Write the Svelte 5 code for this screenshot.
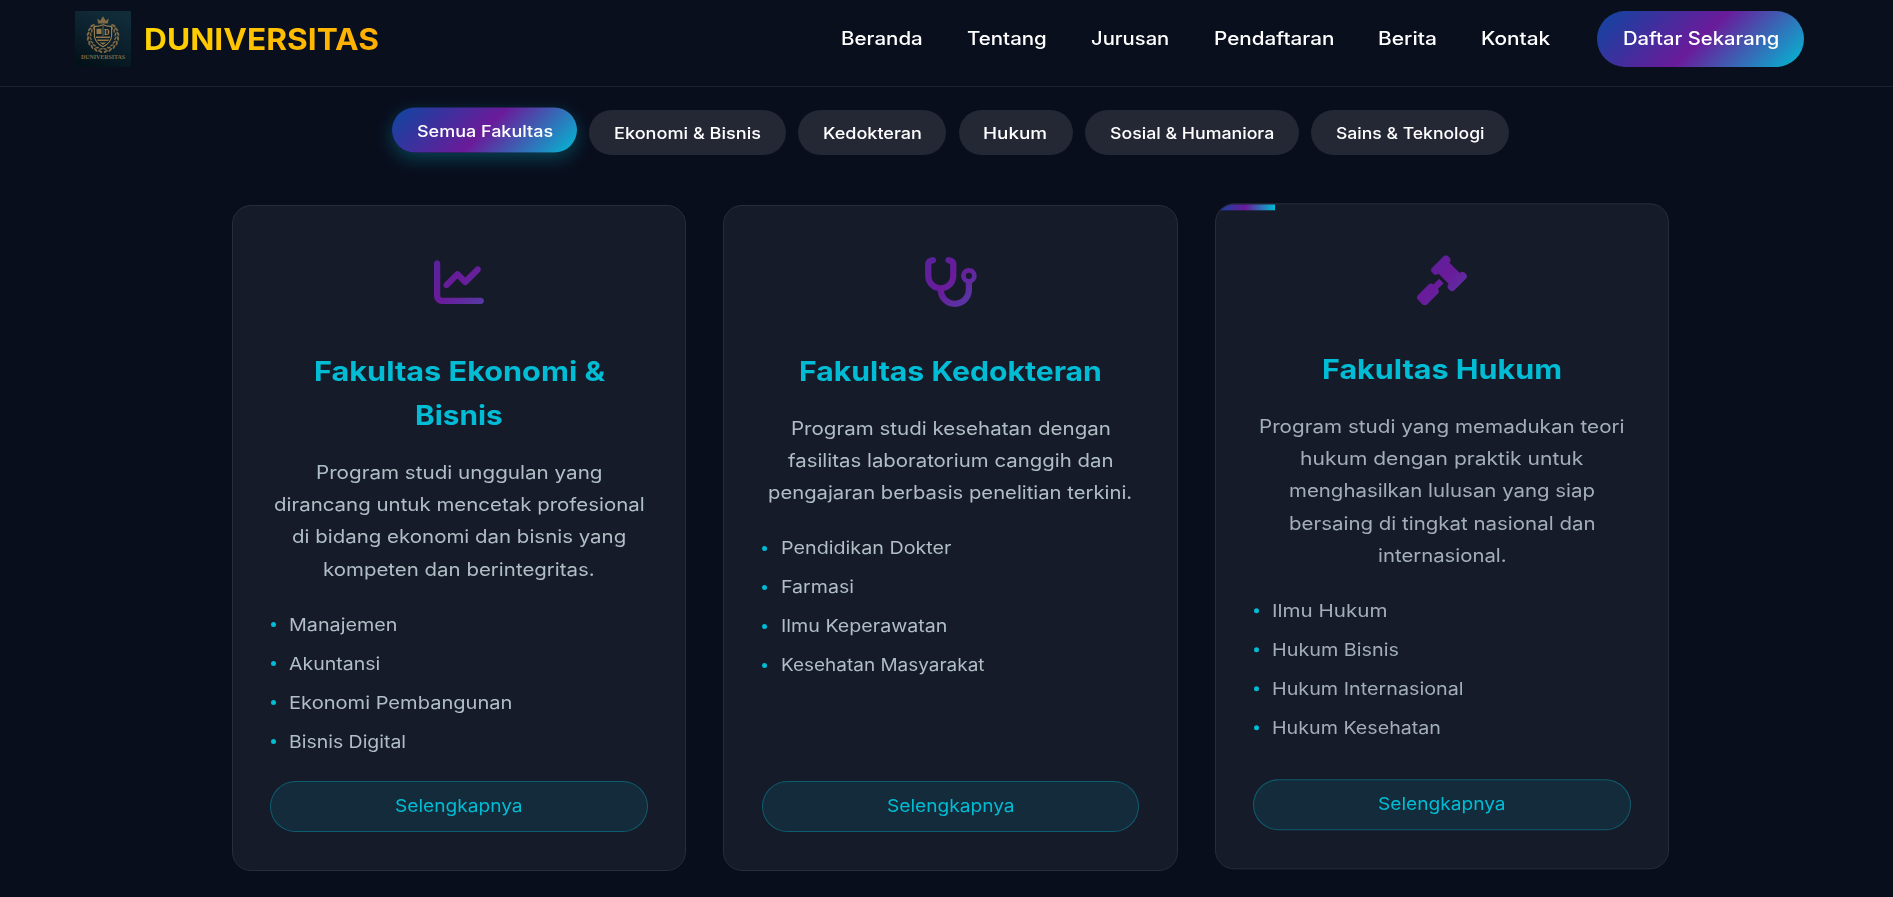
<script>
  const nav = [
    ['Beranda', 82], ['Tentang', 79.5], ['Jurusan', 78.5],
    ['Pendaftaran', 120], ['Berita', 58.5], ['Kontak', 69.5]
  ];

  const filters = [
    ['Semua Fakultas', 136, 185], ['Ekonomi & Bisnis', 147, 197], ['Kedokteran', 99, 148],
    ['Hukum', 64.5, 114], ['Sosial & Humaniora', 164.5, 214], ['Sains & Teknologi', 148, 198]
  ];

  const faculties = [
    {
      icon: 'chart',
      title: [['Fakultas Ekonomi &', 291], ['Bisnis', 88]],
      text: [
        ['Program studi unggulan yang', 287], ['dirancang untuk mencetak profesional', 371],
        ['di bidang ekonomi dan bisnis yang', 334], ['kompeten dan berintegritas.', 272]
      ],
      programs: [['Manajemen', 108.5], ['Akuntansi', 91.5], ['Ekonomi Pembangunan', 223], ['Bisnis Digital', 117]]
    },
    {
      icon: 'stethoscope',
      title: [['Fakultas Kedokteran', 303]],
      text: [
        ['Program studi kesehatan dengan', 319.5], ['fasilitas laboratorium canggih dan', 325],
        ['pengajaran berbasis penelitian terkini.', 364]
      ],
      programs: [['Pendidikan Dokter', 170], ['Farmasi', 72.5], ['Ilmu Keperawatan', 166], ['Kesehatan Masyarakat', 203]]
    },
    {
      icon: 'gavel',
      hovered: true,
      title: [['Fakultas Hukum', 240.5]],
      text: [
        ['Program studi yang memadukan teori', 365.5], ['hukum dengan praktik untuk', 283.5],
        ['menghasilkan lulusan yang siap', 306.5], ['bersaing di tingkat nasional dan', 306],
        ['internasional.', 128.5]
      ],
      programs: [['Ilmu Hukum', 115.5], ['Hukum Bisnis', 127], ['Hukum Internasional', 192], ['Hukum Kesehatan', 169.5]]
    }
  ];

  const icons = {
    chart: {
      w: 512,
      d: 'M64 64c0-17.7-14.3-32-32-32S0 46.3 0 64V400c0 44.2 35.8 80 80 80H480c17.7 0 32-14.3 32-32s-14.3-32-32-32H80c-8.8 0-16-7.2-16-16V64zm406.6 86.6c12.5-12.5 12.5-32.8 0-45.3s-32.8-12.5-45.3 0L320 210.7l-57.4-57.4c-12.5-12.5-32.8-12.5-45.3 0l-112 112c-12.5 12.5-12.5 32.8 0 45.3s32.8 12.5 45.3 0L240 221.3l57.4 57.4c12.5 12.5 32.8 12.5 45.3 0l128-128z'
    },
    stethoscope: {
      w: 576,
      d: 'M142.4 21.9c5.6 16.8-3.5 34.9-20.2 40.5L96 71.1V192c0 53 43 96 96 96s96-43 96-96V71.1l-26.1-8.7c-16.8-5.6-25.8-23.7-20.2-40.5s23.7-25.8 40.5-20.2l26.1 8.7C334.4 19.1 352 43.5 352 71.1V192c0 77.2-54.6 141.6-127.3 156.7C231 404.6 278.4 448 336 448c61.9 0 112-50.1 112-112V265.3c-28.3-12.3-48-40.5-48-73.3c0-44.2 35.8-80 80-80s80 35.8 80 80c0 32.8-19.7 61-48 73.3V336c0 97.2-78.8 176-176 176c-92.9 0-168.9-71.9-175.5-163.1C87.2 334.2 32 269.6 32 192V71.1c0-27.5 17.6-52 43.8-60.7l26.1-8.7c16.8-5.6 34.9 3.5 40.5 20.2zM480 224a32 32 0 1 0 0-64 32 32 0 1 0 0 64z'
    },
    gavel: {
      w: 512,
      d: 'M318.6 9.4c-12.5-12.5-32.8-12.5-45.3 0l-120 120c-12.5 12.5-12.5 32.8 0 45.3l16 16c12.5 12.5 32.8 12.5 45.3 0l4-4L325.4 293.4l-4 4c-12.5 12.5-12.5 32.8 0 45.3l16 16c12.5 12.5 32.8 12.5 45.3 0l120-120c12.5-12.5 12.5-32.8 0-45.3l-16-16c-12.5-12.5-32.8-12.5-45.3 0l-4 4L330.6 74.6l4-4c12.5-12.5 12.5-32.8 0-45.3l-16-16zm-152 288c-12.5-12.5-32.8-12.5-45.3 0l-112 112c-12.5 12.5-12.5 32.8 0 45.3l48 48c12.5 12.5 32.8 12.5 45.3 0l112-112c12.5-12.5 12.5-32.8 0-45.3l-1.4-1.4L272 285.3 226.7 240 168 298.7l-1.4-1.4z'
    }
  };

  // Leaves of the left half of the laurel wreath, as angles round the shield.
  const leaves = [100, 118, 136, 154, 172, 190, 208, 226];

  // Widens the letterforms so that a line takes exactly the given width.
  function stretch(node, width) {
    node.style.transform = `scaleX(${width / node.offsetWidth})`;
  }
</script>

{#snippet line(text, width)}
  <span class="line" style="width: {width}px"><span class="glyphs" use:stretch={width}>{text}</span></span>
{/snippet}

<header>
  <div class="brand">
    <svg class="crest" viewBox="0 0 56 56" aria-hidden="true">
      <defs>
        <linearGradient id="crest-bg" x1="0.7" y1="0" x2="0.3" y2="1">
          <stop offset="0" stop-color="#122d3a" />
          <stop offset="0.55" stop-color="#0a1f2b" />
          <stop offset="1" stop-color="#031219" />
        </linearGradient>
      </defs>
      <rect width="56" height="56" fill="url(#crest-bg)" />
      <g fill="#806a45">
        <path d="M23.2 12.6 22.2 7.6l3 2.2L28 5.2l2.8 4.6 3-2.2-1 5z" />
        {#each leaves as a}
          <ellipse cx="15.2" cy="0" rx="1" ry="2.4" transform="translate(28 25.5) rotate({a}) rotate(18 14.7 0)" />
          <ellipse cx="12.6" cy="0" rx="0.8" ry="2" transform="translate(28 25.5) rotate({a}) rotate(-24 12.2 0)" />
          <ellipse cx="15.2" cy="0" rx="1" ry="2.4" transform="translate(28 25.5) scale(-1 1) rotate({a}) rotate(18 14.7 0)" />
          <ellipse cx="12.6" cy="0" rx="0.8" ry="2" transform="translate(28 25.5) scale(-1 1) rotate({a}) rotate(-24 12.2 0)" />
        {/each}
      </g>
      <path d="M19.4 15.4Q24 15.6 28 13.8Q32 15.6 36.6 15.4V25Q36 32 28 35.8Q20 32 19.4 25z" fill="#0b1f2a" stroke="#a08251" stroke-width="1.1" />
      <path d="M21.5 17.8h5v5.2h-5zM21 25.5h14v1.5H21zM21.8 28.5h12.4l-1 1.5H22.8zM24.5 31.5h7L28 33.7z" fill="#92774a" />
      <path d="M28 15v10" stroke="#92774a" stroke-width="0.8" />
      <text x="31.7" y="23.6" font-size="7.5" text-anchor="middle" class="mark">D</text>
      <text x="28" y="47.9" font-size="6" text-anchor="middle" textLength="44" class="mark word">DUNIVERSITAS</text>
    </svg>
    <span class="name">{@render line('DUNIVERSITAS', 235.5)}</span>
  </div>
  <nav>
    {#each nav as [label, width]}
      <a href="#{label}">{@render line(label, width)}</a>
    {/each}
    <a class="cta" href="#daftar">{@render line('Daftar Sekarang', 156)}</a>
  </nav>
</header>

<main>
  <div class="filters">
    {#each filters as [label, width, pill], i}
      <button class:active={i === 0} style="width: {pill}px">{@render line(label, width)}</button>
    {/each}
  </div>

  <div class="grid">
    {#each faculties as f}
      <article class:hovered={f.hovered}>
        <svg class="icon" viewBox="0 0 {icons[f.icon].w} 512" aria-hidden="true">
          <defs>
            <linearGradient id="grad-{f.icon}" gradientUnits="userSpaceOnUse" x1="-939" y1="-939" x2="1451" y2="1451">
              <stop offset="0" stop-color="#0d47a1" />
              <stop offset="0.5" stop-color="#6a1b9a" />
              <stop offset="1" stop-color="#00bcd4" />
            </linearGradient>
          </defs>
          <path fill="url(#grad-{f.icon})" d={icons[f.icon].d} />
        </svg>
        <h3>
          {#each f.title as [text, width]}
            <span class="row">{@render line(text, width)}</span>
          {/each}
        </h3>
        <p>
          {#each f.text as [text, width]}
            <span class="row">{@render line(text, width)}</span>
          {/each}
        </p>
        <ul>
          {#each f.programs as [text, width]}
            <li>{@render line(text, width)}</li>
          {/each}
        </ul>
        <a class="more" href="#detail">{@render line('Selengkapnya', 127.5)}</a>
      </article>
    {/each}
  </div>
</main>

<style>
  :global(html) {
    overflow: hidden;
  }
  :global(body) {
    background: #090e1d;
    font-family: Inter, 'Open Sans', sans-serif;
    color: #fff;
  }
  a {
    color: inherit;
    text-decoration: none;
  }
  .line {
    display: inline-block;
    text-align: left;
    white-space: nowrap;
  }
  .glyphs {
    display: inline-block;
    transform-origin: 0 50%;
  }
  header {
    box-sizing: border-box;
    height: 87px;
    padding: 11px 89px 19px 75px;
    display: flex;
    align-items: center;
    justify-content: space-between;
    background: #0a0f1e;
    border-bottom: 1px solid #1b202b;
  }
  .brand {
    display: flex;
    align-items: center;
    gap: 13px;
  }
  .crest {
    width: 56px;
    height: 56px;
  }
  .mark {
    font-family: 'Liberation Serif', serif;
    font-weight: 700;
    fill: #ae8c55;
  }
  .word {
    fill: #7d6a48;
  }
  .name {
    font-size: 29.5px;
    font-weight: 700;
    line-height: 40px;
    margin-bottom: 1px;
  }
  .name .glyphs {
    background: linear-gradient(135deg, #ffd700, #ffaa00);
    -webkit-background-clip: text;
    background-clip: text;
    color: transparent;
  }
  nav {
    display: flex;
    align-items: center;
    gap: 44.4px;
    font-size: 18.3px;
    font-weight: 500;
    line-height: 28px;
  }
  nav .line {
    margin-bottom: 1.6px;
  }
  .cta {
    box-sizing: border-box;
    width: 207px;
    height: 56px;
    margin-left: 2px;
    display: flex;
    align-items: center;
    justify-content: center;
    border-radius: 28px;
    background: linear-gradient(135deg, #0d47a1, #6a1b9a, #00bcd4);
  }
  .filters {
    display: flex;
    gap: 12.2px;
    padding: 23px 0 0 392px;
  }
  button {
    height: 45px;
    padding: 0;
    border: 0;
    border-radius: 23px;
    background: #242835;
    color: #fff;
    font: 500 16.4px/26px Inter, sans-serif;
    text-align: center;
  }
  button.active {
    background: linear-gradient(135deg, #0d47a1, #6a1b9a, #00bcd4);
    transform: translateY(-2.5px);
    box-shadow: 0 6px 18px rgba(0, 188, 212, 0.3);
  }
  .grid {
    width: 1437px;
    margin: 50px 0 0 232px;
    display: grid;
    grid-template-columns: repeat(3, 1fr);
    gap: 37px;
  }
  article {
    position: relative;
    box-sizing: border-box;
    height: 666px;
    padding: 51px 37.4px 38px;
    display: flex;
    flex-direction: column;
    overflow: hidden;
    border: 1px solid #292d39;
    border-radius: 19px;
    background: #161b29;
  }
  article.hovered {
    transform: translateY(-1.7px);
  }
  article.hovered::before {
    content: '';
    position: absolute;
    top: 0;
    left: 0;
    width: 59.5px;
    height: 6px;
    background: linear-gradient(90deg, #0d47a1, #6a1b9a, #00bcd4);
  }
  .icon {
    height: 50px;
    align-self: center;
    flex: none;
  }
  h3 {
    margin: 42px 0 18.7px;
    font-size: 27.4px;
    font-weight: 700;
    line-height: 44px;
    color: #00bcd4;
    text-align: center;
  }
  .row {
    display: block;
  }
  p {
    margin: 0 0 24.7px;
    font-size: 18.2px;
    line-height: 32.3px;
    color: #b0bec5;
    text-align: center;
  }
  ul {
    margin: 0;
    padding: 0;
    list-style: none;
    display: flex;
    flex-direction: column;
    gap: 9px;
    font-size: 17.3px;
    line-height: 30px;
    color: #b0bec5;
  }
  li {
    height: 30px;
    display: flex;
    align-items: center;
    gap: 13.4px;
    padding-left: 0.6px;
  }
  li::before {
    content: '';
    width: 5px;
    height: 5px;
    border-radius: 50%;
    background: #00bcd4;
  }
  .hovered p,
  .hovered ul {
    color: #a3afb8;
  }
  .more {
    box-sizing: border-box;
    height: 51.5px;
    margin-top: auto;
    padding-bottom: 1.5px;
    display: flex;
    align-items: center;
    justify-content: center;
    border: 1px solid rgba(0, 188, 212, 0.35);
    border-radius: 26px;
    background: rgba(0, 188, 212, 0.1);
    color: #00bcd4;
    font-size: 17.4px;
  }
</style>
